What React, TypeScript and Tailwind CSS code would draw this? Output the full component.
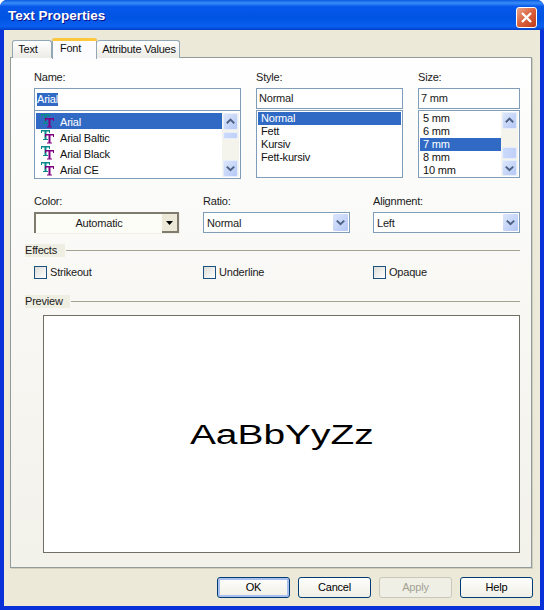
import React from "react";

const uiFont = "font-['Liberation_Sans',Arial,sans-serif] text-[11px] tracking-[-0.2px]";
const labelFont = `${uiFont} leading-[13px] text-[#1a1a1a]`;
const fieldBorder = "border border-[#7f9db9] bg-white";

function ChevronUp() {
  return (
    <svg width="9" height="7" viewBox="0 0 9 7" className="block">
      <path d="M0.8 5.2 L4.5 1.6 L8.2 5.2" fill="none" stroke="#4d6185" strokeWidth="2" />
    </svg>
  );
}

function ChevronDown() {
  return (
    <svg width="9" height="7" viewBox="0 0 9 7" className="block">
      <path d="M0.8 1.6 L4.5 5.2 L8.2 1.6" fill="none" stroke="#4d6185" strokeWidth="2" />
    </svg>
  );
}

function ScrollButton({ down, className = "h-[17px]" }: { down?: boolean; className?: string }) {
  return (
    <div className={`flex w-[15px] items-center justify-center rounded-[2px] border border-[#e6edfb] bg-gradient-to-br from-[#dce6fb] to-[#b4c7f5] ${className}`}>
      {down ? <ChevronDown /> : <ChevronUp />}
    </div>
  );
}

function ThumbButton({ className = "" }: { className?: string }) {
  return <div className={`w-[15px] rounded-[2px] border border-[#e6edfb] bg-gradient-to-r from-[#cbd9fa] to-[#c0d0f8] ${className}`} />;
}

function FontIcon() {
  return (
    <svg width="13" height="14" viewBox="0 0 13 14" className="block shrink-0">
      <path d="M0 0 H9 V3 H8 V1.5 H5.5 V9 H7 V10 H2 V9 H3.5 V1.5 H1 V3 H0 Z" fill="#0a8a8a" />
      <path d="M4 4 H13 V7 H12 V5.5 H9.5 V12.5 H11 V13.5 H6 V12.5 H7.5 V5.5 H5 V7 H4 Z" fill="#800080" />
    </svg>
  );
}

function FontRow({ name, selected }: { name: string; selected?: boolean }) {
  return (
    <div className={`flex h-4 items-center pl-[5px] ${selected ? "bg-[#316ac5] text-white" : "text-[#111]"}`}>
      <FontIcon />
      <span className={`ml-[6px] pt-[2px] ${uiFont}`}>{name}</span>
    </div>
  );
}

function ListRow({ text, selected }: { text: string; selected?: boolean }) {
  return (
    <div className={`h-[13px] pl-[3px] ${uiFont} leading-[13px] ${selected ? "bg-[#316ac5] text-white" : "text-[#111]"}`}>
      {text}
    </div>
  );
}

function SelectField({ value, width }: { value: string; width: string }) {
  return (
    <div className={`flex h-[21px] items-center justify-between pl-[3px] pr-[1px] ${fieldBorder} ${width}`}>
      <span className={`pt-[1px] ${labelFont}`}>{value}</span>
      <div className="flex h-[17px] w-[15px] items-center justify-center rounded-[1px] bg-gradient-to-br from-[#dce6fb] to-[#b4c7f5]">
        <ChevronDown />
      </div>
    </div>
  );
}

function Check({ label, className }: { label: string; className: string }) {
  return (
    <div className={`flex items-center ${className}`}>
      <div className="h-[13px] w-[13px] border border-[#1c5180] bg-gradient-to-br from-[#dcdcd7] to-white" />
      <span className={`ml-[3px] ${labelFont}`}>{label}</span>
    </div>
  );
}

function SectionLine({ label, labelWidth }: { label: string; labelWidth: string }) {
  return (
    <div className="flex h-[13px] items-center">
      <div className={`${labelFont} h-[13px] bg-[#efeee3] ${labelWidth}`}>{label}</div>
      <div className="ml-[1px] h-px flex-1 bg-[#a5a294]" />
    </div>
  );
}

function Button({ label, primary, disabled }: { label: string; primary?: boolean; disabled?: boolean }) {
  const border = disabled ? "border-[#c9c7ba] text-[#a1a192]" : "border-[#003c74] text-black";
  const fill = disabled
    ? "bg-[#f0efe6]"
    : primary
      ? "bg-gradient-to-b from-[#fefefd] to-[#f0efe6] shadow-[inset_0_0_0_2px_#a9bff0]"
      : "bg-gradient-to-b from-[#fefefd] to-[#f0efe6]";
  return (
    <div className={`flex h-[21px] w-[73px] items-center justify-center rounded-[3px] border ${border} ${fill} ${uiFont}`}>
      {label}
    </div>
  );
}

export default function App() {
  return (
    <div className="flex h-[610px] w-[544px] flex-col rounded-t-[7px] bg-[#0831d9]">
      {/* title bar */}
      <div className="flex h-[30px] shrink-0 items-center justify-between rounded-t-[7px] bg-[linear-gradient(180deg,#0a5ae0_0%,#3a8cf8_10%,#0558ea_22%,#0054e3_60%,#0a5ff0_88%,#0040c8_100%)] pl-2 pr-[7px]">
        <span className="pt-[3px] font-['Liberation_Sans',Arial,sans-serif] text-[13.5px] font-bold text-white [text-shadow:1px_1px_#0f1089]">Text Properties</span>
        <div className="mt-[4px] flex h-[21px] w-[21px] items-center justify-center rounded-[3px] border border-white bg-gradient-to-br from-[#e9a58a] via-[#d9603a] to-[#c03a1a]">
          <svg width="13" height="13" viewBox="0 0 13 13">
            <path d="M2 2 L11 11 M11 2 L2 11" stroke="#fff" strokeWidth="2.4" />
          </svg>
        </div>
      </div>

      {/* dialog body */}
      <div className="mx-1 mb-1 flex flex-1 flex-col bg-[#ece9d8] px-[6px] pt-[8px]">
        {/* tabs */}
        <div className={`relative z-10 flex h-[20px] items-end pl-[2px] text-[#111] ${uiFont}`}>
          <div className="flex h-[18px] w-[40px] items-center justify-center rounded-t-[3px] border border-b-0 border-[#91a7b4] bg-gradient-to-b from-white to-[#ecebe5] pr-[8px]">Text</div>
          <div className="relative -mb-px h-[21px] w-[45px] rounded-t-[3px] border-x border-[#91a7b4] bg-[#fcfcfe]">
            <div className="-mx-px h-[3px] rounded-t-[3px] bg-[#ffc73c]" />
            <div className="pr-[8px] text-center leading-[14px]">Font</div>
          </div>
          <div className="flex h-[18px] w-[83px] items-center justify-center rounded-t-[3px] border border-b-0 border-l-0 border-[#91a7b4] bg-gradient-to-b from-white to-[#ecebe5] pl-[2px]">Attribute Values</div>
        </div>

        {/* panel */}
        <div className="flex h-[511px] w-[522px] -mt-px flex-col border border-[#919b9c] bg-gradient-to-b from-[#fefefe] to-[#f2f1ea] pl-[23px] pr-[11px] pt-[13px] shadow-[1px_1px_0_#d0cebf]">
          {/* name / style / size */}
          <div className="flex gap-[15px]">
            <div className="w-[207px]">
              <div className={`${labelFont} mb-1`}>Name:</div>
              <div className={`flex h-[23px] items-center pl-[2px] ${fieldBorder}`}>
                <span className={`bg-[#316ac5] text-white ${uiFont} leading-[13px]`}>Arial</span>
              </div>
              <div className={`flex h-[69px] p-[1px] pt-[2px] ${fieldBorder} -mt-px`}>
                <div className="flex-1">
                  <FontRow name="Arial" selected />
                  <FontRow name="Arial Baltic" />
                  <FontRow name="Arial Black" />
                  <FontRow name="Arial CE" />
                </div>
                <div className="relative flex w-[17px] flex-col items-center bg-[#f4f3ec]">
                  <ScrollButton />
                  <ThumbButton className="mt-[2px] h-[7px]" />
                  <div className="flex-1" />
                  <ScrollButton down />
                </div>
              </div>
            </div>

            <div className="w-[147px]">
              <div className={`${labelFont} mb-1`}>Style:</div>
              <div className={`flex h-[21px] items-center pl-[2px] ${fieldBorder} ${labelFont}`}>Normal</div>
              <div className={`mt-[1px] h-[68px] p-[1px] ${fieldBorder}`}>
                <ListRow text="Normal" selected />
                <ListRow text="Fett" />
                <ListRow text="Kursiv" />
                <ListRow text="Fett-kursiv" />
              </div>
            </div>

            <div className="w-[102px]">
              <div className={`${labelFont} mb-1`}>Size:</div>
              <div className={`flex h-[21px] items-center pl-[2px] ${fieldBorder} ${labelFont}`}>7 mm</div>
              <div className={`mt-[1px] flex h-[68px] p-[1px] ${fieldBorder}`}>
                <div className="flex-1">
                  <ListRow text="5 mm" />
                  <ListRow text="6 mm" />
                  <ListRow text="7 mm" selected />
                  <ListRow text="8 mm" />
                  <ListRow text="10 mm" />
                </div>
                <div className="flex w-[17px] flex-col items-center bg-[#f4f3ec]">
                  <ScrollButton />
                  <div className="flex-1" />
                  <ThumbButton className="mb-[1px] h-[12px]" />
                  <ScrollButton down className="h-[16px]" />
                </div>
              </div>
            </div>
          </div>

          {/* color / ratio / alignment */}
          <div className="mt-[16px] flex">
            <div className="w-[169px]">
              <div className={`${labelFont} mb-1`}>Color:</div>
              <div className="flex h-[21px] w-[145px] border-l-2 border-t-2 border-[#7f7c6f] bg-[#fdfdf8] shadow-[1px_1px_0_#f0efe8]">
                <div className={`flex flex-1 items-center justify-center pb-[1px] ${labelFont}`}>Automatic</div>
                <div className="flex w-[17px] items-center justify-center border-r-2 border-b-2 border-[#7f7c6f] bg-[#ece9d8]">
                  <svg width="7" height="4" viewBox="0 0 7 4">
                    <path d="M0 0 H7 L3.5 4 Z" fill="#000" />
                  </svg>
                </div>
              </div>
            </div>
            <div className="w-[170px]">
              <div className={`${labelFont} mb-1`}>Ratio:</div>
              <SelectField value="Normal" width="w-[147px]" />
            </div>
            <div>
              <div className={`${labelFont} mb-1`}>Alignment:</div>
              <SelectField value="Left" width="w-[147px]" />
            </div>
          </div>

          {/* effects */}
          <div className="-ml-[9px] mt-[11px]">
            <SectionLine label="Effects" labelWidth="w-[40px]" />
          </div>
          <div className="mt-[9px] flex">
            <Check label="Strikeout" className="w-[169px]" />
            <Check label="Underline" className="w-[170px]" />
            <Check label="Opaque" className="" />
          </div>

          {/* preview */}
          <div className="-ml-[9px] mt-[16px]">
            <SectionLine label="Preview" labelWidth="w-[45px]" />
          </div>
          <div className="ml-[9px] mt-[7px] flex h-[238px] items-center justify-center border border-[#716f64] bg-white">
            <span className="scale-x-[1.44] pt-[2px] font-['Liberation_Sans',Arial,sans-serif] text-[27px] text-black">AaBbYyZz</span>
          </div>
        </div>

        {/* buttons */}
        <div className="mt-[9px] flex justify-end gap-2 pr-[1px]">
          <Button label="OK" primary />
          <Button label="Cancel" />
          <Button label="Apply" disabled />
          <Button label="Help" />
        </div>
      </div>
    </div>
  );
}
